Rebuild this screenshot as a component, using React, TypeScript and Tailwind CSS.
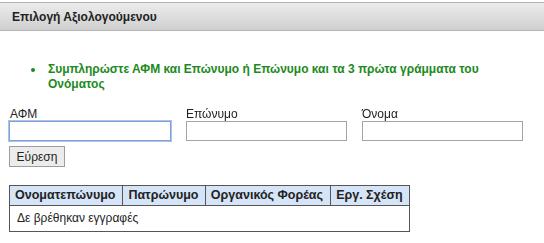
import React, { useState } from 'react';

const font = { fontFamily: 'Tahoma, "Liberation Sans", "DejaVu Sans", sans-serif' };

const columns = ['Ονοματεπώνυμο', 'Πατρώνυμο', 'Οργανικός Φορέας', 'Εργ. Σχέση'];

const App: React.FC = () => {
  const [afm, setAfm] = useState('');
  const [surname, setSurname] = useState('');
  const [name, setName] = useState('');

  return (
    <div className="w-[544px] h-[243px] bg-white text-[12px] text-[#222] overflow-hidden" style={font}>
      {/* Header */}
      <div className="mt-[2px] h-[29px] border-t border-b border-[#b4b4b4] bg-gradient-to-b from-[#ececec] to-[#cfcfcf] flex items-center pl-[12px]">
        <h1 className="font-bold text-[12px] text-[#222]">Επιλογή Αξιολογούμενου</h1>
      </div>

      {/* Hint */}
      <ul className="mt-[31px] pl-[31px] pr-[40px] list-disc text-[#1d8a1d] font-bold text-[12px] leading-[15px]">
        <li className="pl-[3px] ml-[14px]">
          Συμπληρώστε ΑΦΜ και Επώνυμο ή Επώνυμο και τα 3 πρώτα γράμματα του Ονόματος
        </li>
      </ul>

      {/* Search fields */}
      <div className="mt-[16px] flex pl-[9px] gap-[15px]">
        <label className="flex flex-col w-[162px]">
          <span className="text-[12px] leading-[13px] pl-[1px]">ΑΦΜ</span>
          <input
            autoFocus
            value={afm}
            onChange={e => setAfm(e.target.value)}
            className="h-[20px] w-[162px] border border-[#7ea1d8] outline outline-1 outline-[#a9c3ea] px-1 text-[12px]"
          />
        </label>
        <label className="flex flex-col w-[161px]">
          <span className="text-[12px] leading-[13px]">Επώνυμο</span>
          <input
            value={surname}
            onChange={e => setSurname(e.target.value)}
            className="h-[20px] w-[161px] border border-[#a5a5a5] px-1 text-[12px] outline-none"
          />
        </label>
        <label className="flex flex-col w-[161px]">
          <span className="text-[12px] leading-[13px]">Όνομα</span>
          <input
            value={name}
            onChange={e => setName(e.target.value)}
            className="h-[20px] w-[161px] border border-[#a5a5a5] px-1 text-[12px] outline-none"
          />
        </label>
      </div>

      <div className="pl-[9px] mt-[5px]">
        <button className="h-[21px] w-[56px] border border-[#9d9d9d] bg-[#ececec] text-[12px] text-[#222]">
          Εύρεση
        </button>
      </div>

      {/* Results */}
      <table className="ml-[9px] mt-[18px] w-[401px] border-collapse border border-[#555] text-[12px]">
        <thead>
          <tr className="bg-[#d5e4f7]">
            {columns.map(c => (
              <th key={c} className="border border-[#555] h-[19px] px-[5px] font-bold text-left whitespace-nowrap text-[12.5px]">
                {c}
              </th>
            ))}
          </tr>
        </thead>
        <tbody>
          <tr>
            <td colSpan={4} className="h-[26px] px-[7px] pt-[5px] align-top leading-[14px]">
              Δε βρέθηκαν εγγραφές
            </td>
          </tr>
        </tbody>
      </table>
    </div>
  );
};

export default App;
